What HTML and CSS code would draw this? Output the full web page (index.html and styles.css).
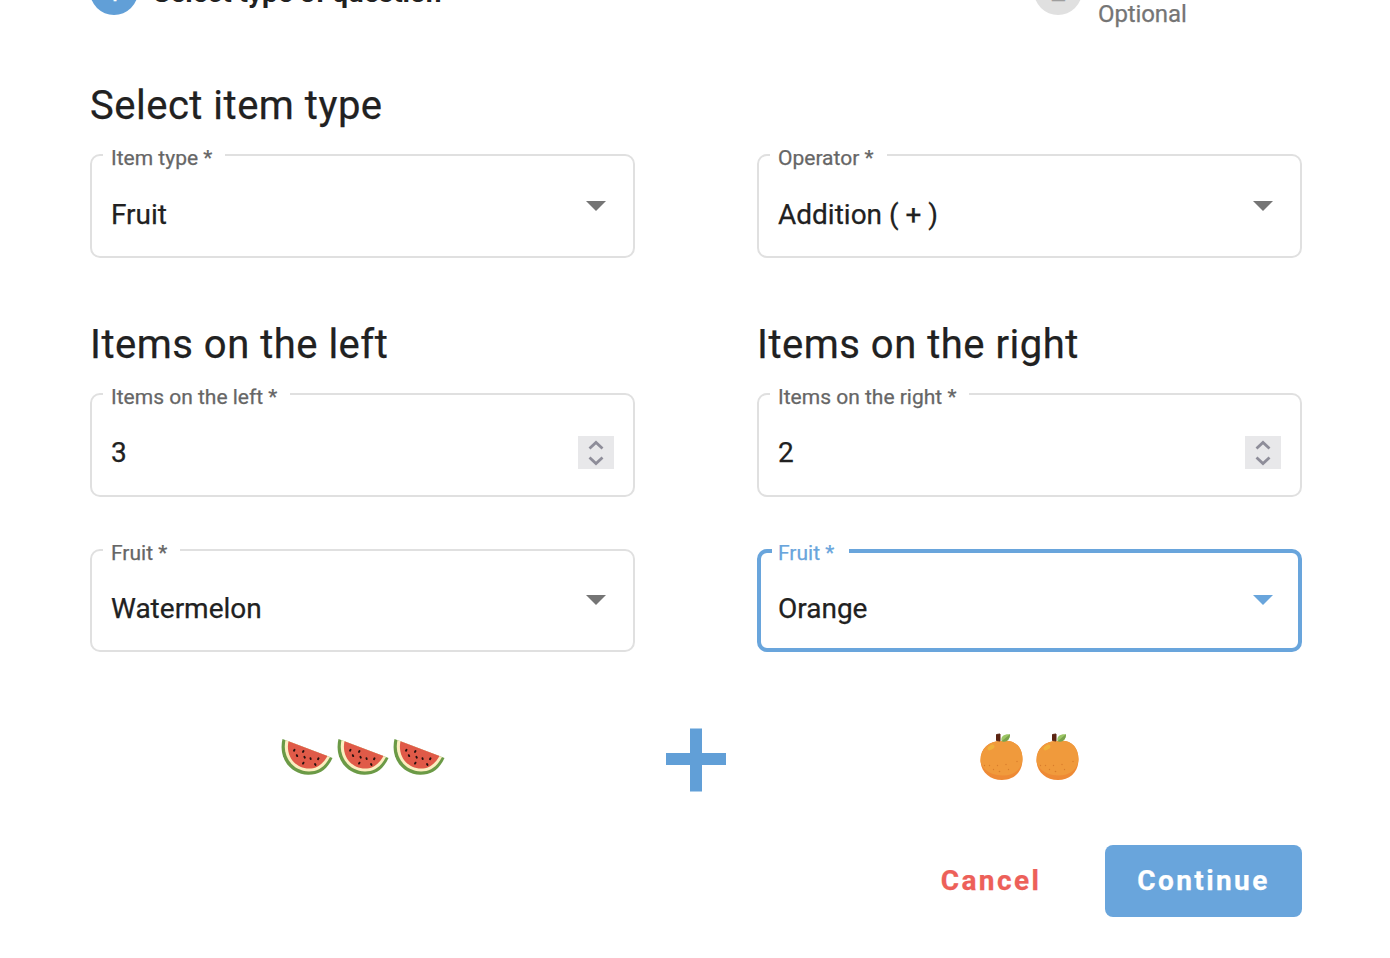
FILE: index.html
```html
<!DOCTYPE html>
<html lang="en">
<head>
<meta charset="utf-8">
<title>Select type of question</title>
<link rel="stylesheet" href="styles.css">
</head>
<body>
<svg class="defs" aria-hidden="true">
  <symbol id="melon" viewBox="0 0 52 38">
    <path d="M1.500 1C-3 20 9 36 27 36.800C38 37 46 32 51.500 20Z" fill="#6b9a46"/>
    <path d="M4.500 2C1 18 11 33 28 33.500C37 33.500 44 29 49 19Z" fill="#fbeec0"/>
    <path d="M7.500 3.200C4.500 17 13 30 28 30.600C36 30.600 42 26 46.500 18Z" fill="#e05a48"/>
    <g stroke="#24110f" stroke-width="1.900" stroke-linecap="round">
      <path d="M13.500 11.800l-.5.900M22.500 13l-.5.900M15.800 17.200l.4.900M23.400 18.800l.4.900M29.500 20.200l.2.900M37.500 20.300l-.5.900M22.500 24.700l-.5.900M34 26l.5.900"/>
    </g>
  </symbol>
  <symbol id="orange" viewBox="0 0 44 48">
    <path d="M21.500 8C35 6 42.500 14 42.500 26.500C42.500 39 34 47 22 47S.5 39 .5 27C.5 15 9 8 21.500 8Z" fill="#ee8a35"/>
    <path d="M21.500 8C35 6 42.500 14 42.500 26C42 37 33 42.500 23 42.500S2 38 .5 28C.5 15 9 8 21.500 8Z" fill="#f09a3c"/>
    <ellipse cx="11" cy="14.500" rx="3.800" ry="2.200" transform="rotate(-32 11 14.500)" fill="#efb13b"/>
    <path d="M16.500 1.500L20 1V8L16.500 7.500Z" fill="#5b2412" stroke="#5b2412" stroke-linejoin="round"/>
    <path d="M21.500 8C20.500 3 24 .8 30 1.200C30 6 26.500 9.500 21.500 8Z" fill="#9cc665"/>
    <path d="M21.500 8.300L30 1.200C30 6.500 26.500 9.800 21.500 8.300Z" fill="#79a24c"/>
    <g fill="#d87d2c"><circle cx="4.500" cy="32.500" r=".7"/><circle cx="9.500" cy="32.500" r=".7"/><circle cx="17.500" cy="32.500" r=".7"/><circle cx="26" cy="31.500" r=".7"/><circle cx="13.500" cy="36.500" r=".7"/><circle cx="19.500" cy="38.500" r=".8"/><circle cx="28.500" cy="36.500" r=".7"/><circle cx="37" cy="28.500" r=".7"/></g>
  </symbol>
  <symbol id="spin" viewBox="0 0 36 33">
    <path d="M11.500 12.500L18 6.500L24.500 12.500M11.500 21.500L18 27.500L24.500 21.500" fill="none" stroke="#8e8d99" stroke-width="2.800"/>
  </symbol>
</svg>
<main class="page">
  <header class="stepper">
    <div class="step">
      <span class="step-icon active">1</span>
      <span class="step-title">Select type of question</span>
    </div>
    <div class="step">
      <span class="step-icon">2</span>
      <span class="step-optional">Optional</span>
    </div>
  </header>

  <section class="group">
    <h2 class="heading">Select item type</h2>
    <div class="columns">
      <fieldset class="field tall">
        <legend class="label">Item type *</legend>
        <div class="control"><span class="value">Fruit</span><i class="arrow"></i></div>
      </fieldset>
      <fieldset class="field tall">
        <legend class="label">Operator *</legend>
        <div class="control"><span class="value">Addition ( + )</span><i class="arrow"></i></div>
      </fieldset>
    </div>
  </section>

  <section class="group sides">
    <div class="columns">
      <h2 class="heading">Items on the left</h2>
      <h2 class="heading">Items on the right</h2>
    </div>
    <div class="columns">
      <fieldset class="field number">
        <legend class="label">Items on the left *</legend>
        <div class="control"><span class="value">3</span><svg class="spinner"><use href="#spin"/></svg></div>
      </fieldset>
      <fieldset class="field number">
        <legend class="label">Items on the right *</legend>
        <div class="control"><span class="value">2</span><svg class="spinner"><use href="#spin"/></svg></div>
      </fieldset>
    </div>
    <div class="columns fruit-row">
      <fieldset class="field">
        <legend class="label">Fruit *</legend>
        <div class="control"><span class="value">Watermelon</span><i class="arrow"></i></div>
      </fieldset>
      <fieldset class="field focused">
        <legend class="label">Fruit *</legend>
        <div class="control"><span class="value">Orange</span><i class="arrow"></i></div>
      </fieldset>
    </div>
  </section>

  <section class="preview">
    <div class="items melons">
      <svg><use href="#melon"/></svg><svg><use href="#melon"/></svg><svg><use href="#melon"/></svg>
    </div>
    <svg class="plus" viewBox="0 0 60 64"><path d="M24 .4H36V25H60V37H36V63.600H24V37H0V25H24Z" fill="#619fd7"/></svg>
    <div class="items oranges">
      <svg><use href="#orange"/></svg><svg><use href="#orange"/></svg>
    </div>
  </section>

  <footer class="actions">
    <button class="button cancel">Cancel</button>
    <button class="button continue">Continue</button>
  </footer>
</main>
</body>
</html>
```
FILE: styles.css
```css
* { box-sizing: border-box; }
html, body { overflow: hidden; }
body { margin: 0; background: #fff; color: #212121; font-family: Roboto, "Liberation Sans", sans-serif; -webkit-text-stroke: .25px currentColor; }
.defs { display: none; }
.page { width: 1390px; height: 958px; padding: 0 88px 0 90px; overflow: hidden; display: flow-root; }

.stepper { display: flex; margin-top: -33px; height: 48px; }
.step { display: flex; gap: 15px; align-items: flex-start; width: 944px; flex: none; }
.step-icon { width: 48px; height: 48px; border-radius: 50%; background: #e0e0e0; color: #9e9e9e; font-size: 28px; line-height: 50px; text-align: center; flex: none; }
.step-icon.active { background: #619fd7; color: #fff; }
.step-title { font-size: 28px; font-weight: 700; line-height: 48px; margin-top: 2px; letter-spacing: -.05px; white-space: nowrap; -webkit-text-stroke: 0; }
.step-optional { font-size: 24px; line-height: 28px; margin: 33px 0 0 1px; letter-spacing: -.1px; color: #757575; }

.group { padding-top: 67px; }
.group.sides { padding-top: 63px; }
.heading { margin: 0 0 24px; font-size: 40px; font-weight: 400; line-height: 48px; letter-spacing: .5px; }
.columns { display: grid; grid-template-columns: 545px 545px; column-gap: 122px; }
.fruit-row { margin-top: 52px; }

.field { position: relative; min-width: 0; height: 103px; margin: 0; padding: 0 11px; border: 2px solid #e0e0e0; border-radius: 10px; }
.field.tall, .field.number { height: 104px; }
.label { height: 2px; line-height: 8px; padding: 0 13px 0 8px; font-size: 21px; color: #666; white-space: nowrap; }
.control { display: flex; justify-content: space-between; align-items: flex-start; padding: 38px 8px 0; }
.tall .control { padding-top: 39px; }
.value { font-size: 28px; line-height: 40px; }
.arrow { width: 20px; height: 10px; margin: 6px 8px 0 0; background: #757575; clip-path: polygon(0 0, 100% 0, 50% 100%); }
.spinner { width: 36px; height: 33px; margin-top: 3px; background: #e8e8ea; }
.focused { border: 4px solid #69a5dc; }
.focused .label { height: 4px; color: #69a5dc; padding: 0 15px 0 6px; }
.focused .control { padding: 36px 6px 0; }
.focused .arrow { background: #69a5dc; }

.preview { display: flex; align-items: flex-start; margin-top: 76px; }
.items { display: flex; width: 545px; justify-content: center; }
.melons svg { width: 52px; height: 38px; }
.melons { gap: 4px; padding-top: 10px; }
.oranges svg { width: 44px; height: 48px; }
.oranges { gap: 12px; padding-top: 5px; }
.plus { width: 60px; height: 64px; margin: 0 31px; }

.actions { display: flex; justify-content: flex-end; margin-top: 53px; }
.button { height: 72px; border: 0; border-radius: 8px; background: none; padding: 0; font: 700 28px/72px Roboto, sans-serif; letter-spacing: 2.4px; }
.cancel { width: 164px; margin-right: 32px; color: #ed6059; }
.continue { width: 197px; color: #fff; background: #69a5dc; }
```
